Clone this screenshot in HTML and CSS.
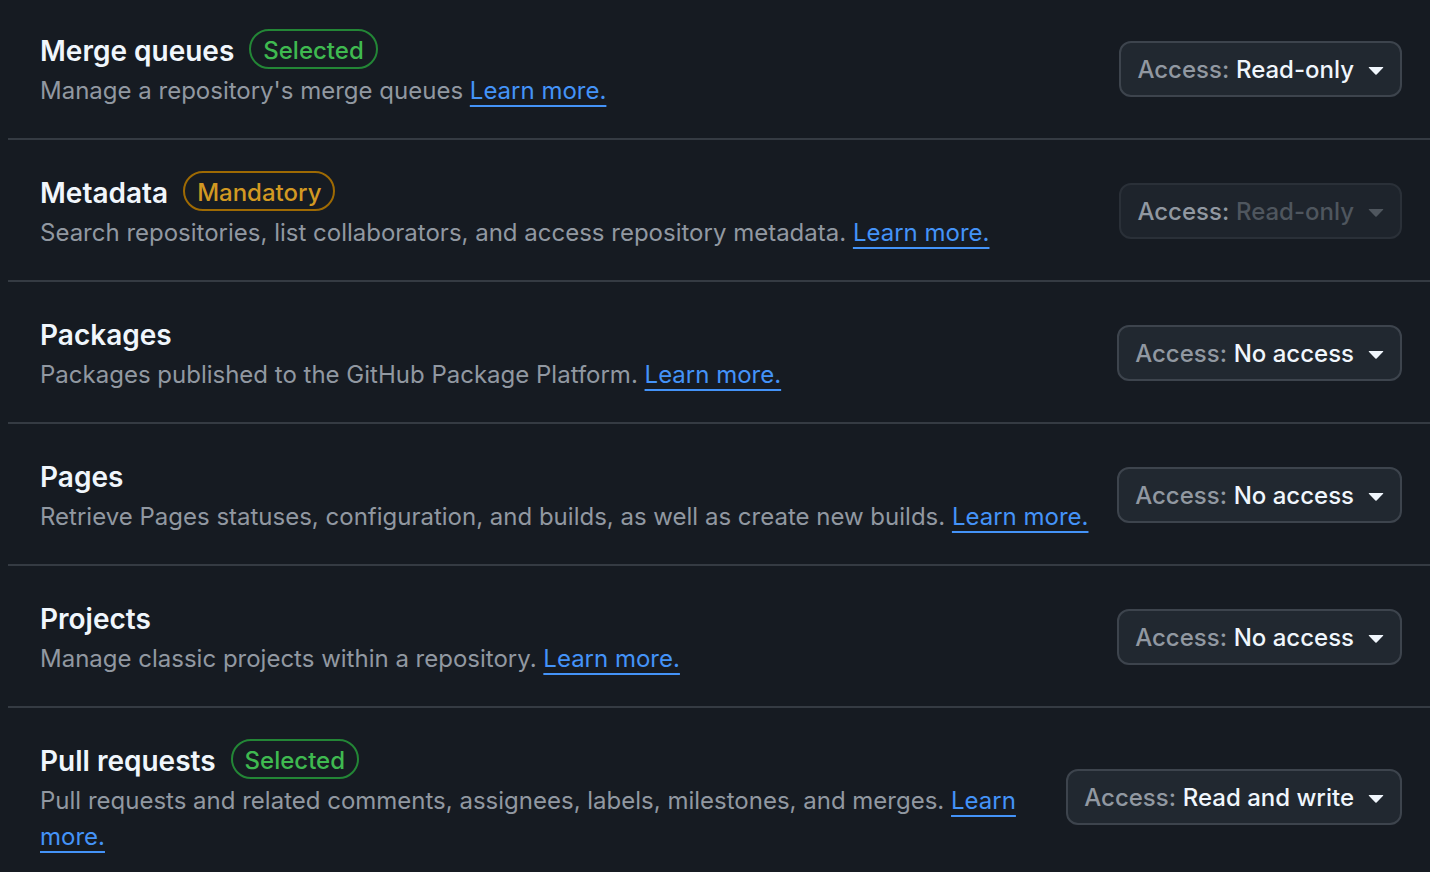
FILE: index.html
```html
<!DOCTYPE html>
<html lang="en">
<head>
<meta charset="utf-8">
<title>Repository permissions</title>
<link rel="stylesheet" href="styles.css">
</head>
<body>
<ul class="perm-list">
  <li class="perm-row">
    <div class="perm-info">
      <div class="perm-head"><h3 class="perm-title">Merge queues</h3><span class="badge badge-selected">Selected</span></div>
      <p class="perm-desc">Manage a repository's merge queues <a href="#" class="link">Learn more.</a></p>
    </div>
    <button class="access-btn" type="button"><span class="access-text"><span class="access-label">Access:</span> <span class="access-value">Read-only</span></span><svg class="caret" viewBox="0 0 16 16" width="32" height="32"><path d="m4.427 7.427 3.396 3.396a.25.25 0 0 0 .354 0l3.396-3.396A.25.25 0 0 0 11.396 7H4.604a.25.25 0 0 0-.177.427Z"/></svg></button>
  </li>
  <li class="perm-row">
    <div class="perm-info">
      <div class="perm-head"><h3 class="perm-title">Metadata</h3><span class="badge badge-mandatory">Mandatory</span></div>
      <p class="perm-desc">Search repositories, list collaborators, and access repository metadata. <a href="#" class="link">Learn more.</a></p>
    </div>
    <button class="access-btn is-disabled" type="button" disabled><span class="access-text"><span class="access-label">Access:</span> <span class="access-value">Read-only</span></span><svg class="caret" viewBox="0 0 16 16" width="32" height="32"><path d="m4.427 7.427 3.396 3.396a.25.25 0 0 0 .354 0l3.396-3.396A.25.25 0 0 0 11.396 7H4.604a.25.25 0 0 0-.177.427Z"/></svg></button>
  </li>
  <li class="perm-row">
    <div class="perm-info">
      <div class="perm-head"><h3 class="perm-title">Packages</h3></div>
      <p class="perm-desc">Packages published to the GitHub Package Platform. <a href="#" class="link">Learn more.</a></p>
    </div>
    <button class="access-btn" type="button"><span class="access-text"><span class="access-label">Access:</span> <span class="access-value">No access</span></span><svg class="caret" viewBox="0 0 16 16" width="32" height="32"><path d="m4.427 7.427 3.396 3.396a.25.25 0 0 0 .354 0l3.396-3.396A.25.25 0 0 0 11.396 7H4.604a.25.25 0 0 0-.177.427Z"/></svg></button>
  </li>
  <li class="perm-row">
    <div class="perm-info">
      <div class="perm-head"><h3 class="perm-title">Pages</h3></div>
      <p class="perm-desc">Retrieve Pages statuses, configuration, and builds, as well as create new builds. <a href="#" class="link">Learn more.</a></p>
    </div>
    <button class="access-btn" type="button"><span class="access-text"><span class="access-label">Access:</span> <span class="access-value">No access</span></span><svg class="caret" viewBox="0 0 16 16" width="32" height="32"><path d="m4.427 7.427 3.396 3.396a.25.25 0 0 0 .354 0l3.396-3.396A.25.25 0 0 0 11.396 7H4.604a.25.25 0 0 0-.177.427Z"/></svg></button>
  </li>
  <li class="perm-row">
    <div class="perm-info">
      <div class="perm-head"><h3 class="perm-title">Projects</h3></div>
      <p class="perm-desc">Manage classic projects within a repository. <a href="#" class="link">Learn more.</a></p>
    </div>
    <button class="access-btn" type="button"><span class="access-text"><span class="access-label">Access:</span> <span class="access-value">No access</span></span><svg class="caret" viewBox="0 0 16 16" width="32" height="32"><path d="m4.427 7.427 3.396 3.396a.25.25 0 0 0 .354 0l3.396-3.396A.25.25 0 0 0 11.396 7H4.604a.25.25 0 0 0-.177.427Z"/></svg></button>
  </li>
  <li class="perm-row">
    <div class="perm-info">
      <div class="perm-head"><h3 class="perm-title">Pull requests</h3><span class="badge badge-selected">Selected</span></div>
      <p class="perm-desc">Pull requests and related comments, assignees, labels, milestones, and merges. <a href="#" class="link">Learn more.</a></p>
    </div>
    <button class="access-btn" type="button"><span class="access-text"><span class="access-label">Access:</span> <span class="access-value">Read and write</span></span><svg class="caret" viewBox="0 0 16 16" width="32" height="32"><path d="m4.427 7.427 3.396 3.396a.25.25 0 0 0 .354 0l3.396-3.396A.25.25 0 0 0 11.396 7H4.604a.25.25 0 0 0-.177.427Z"/></svg></button>
  </li>
</ul>
</body>
</html>
```
FILE: styles.css
```css
html, body {
  margin: 0;
  padding: 0;
  background: #161b22;
}
body {
  font-family: Inter, "Noto Sans", "Liberation Sans", sans-serif;
  color: #f0f6fc;
  overflow: hidden;
}
.perm-list {
  list-style: none;
  margin: 0 0 0 8px;
  padding: 0;
}
.perm-row {
  display: flex;
  align-items: center;
  gap: 24px;
  padding: 31px 28px 29px 32px;
  border-bottom: 2px solid #353b43;
}
.perm-row:first-child {
  padding-top: 29px;
}
.perm-info {
  flex: 1;
  min-width: 0;
}
.perm-head {
  display: flex;
  align-items: center;
  gap: 15px;
  height: 40px;
}
.perm-title {
  margin: 0;
  padding-top: 3px;
  font-size: 28px;
  line-height: 36px;
  font-weight: 600;
  color: #f0f6fc;
}
.badge {
  display: inline-flex;
  align-items: center;
  height: 40px;
  box-sizing: border-box;
  padding: 3px 12px 0;
  border: 2px solid;
  border-radius: 999px;
  font-size: 24px;
  line-height: 33px;
  font-weight: 500;
}
.badge-selected {
  color: #3fb950;
  border-color: #238636;
}
.badge-mandatory {
  color: #d29922;
  border-color: #9e6a03;
}
.perm-desc {
  margin: 4px 0 0;
  font-size: 24px;
  line-height: 36px;
  color: #9198a1;
}
.link {
  color: #4493f8;
  text-decoration: underline;
  text-decoration-thickness: 2px;
  text-underline-offset: 6px;
}
.access-btn {
  display: inline-flex;
  align-items: center;
  flex-shrink: 0;
  height: 56px;
  box-sizing: border-box;
  padding: 0 8px 0 16px;
  background: #212830;
  border: 2px solid #3d444d;
  border-radius: 12px;
  font-family: inherit;
  font-size: 24px;
  cursor: pointer;
}
.access-text {
  white-space: nowrap;
}
.access-label {
  color: #9198a1;
  font-weight: 500;
}
.access-value {
  color: #f0f6fc;
  font-weight: 500;
}
.caret {
  fill: #f0f6fc;
  margin-left: 6px;
}
.access-btn.is-disabled {
  background: #1e242c;
  border-color: #2a3038;
  cursor: default;
}
.is-disabled .access-value {
  color: #4f565e;
}
.is-disabled .caret {
  fill: #4f565e;
}
```
